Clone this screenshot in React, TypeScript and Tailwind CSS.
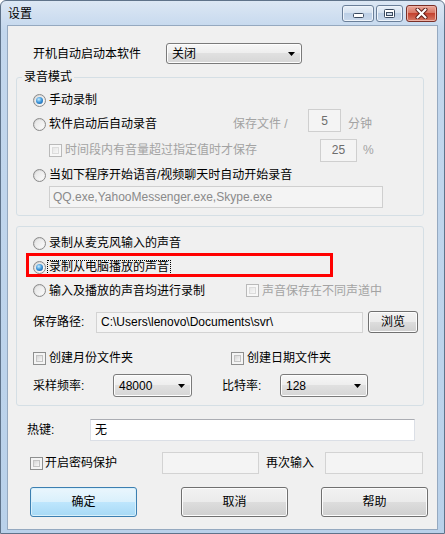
import React from "react";

function Radio({ checked }: { checked?: boolean }) {
  return (
    <span className="w-[13px] h-[13px] shrink-0 rounded-full border border-[#8a8a8a] bg-[linear-gradient(135deg,#cfcfcf,#f9f9f9)] flex items-center justify-center">
      <span className="w-[9px] h-[9px] rounded-full bg-[linear-gradient(135deg,#e4e4e4,#fbfbfb)] flex items-center justify-center">
        {checked && (
          <span className="w-[7px] h-[7px] rounded-full bg-[radial-gradient(circle_at_40%_35%,#c4ecff,#3a93d8_50%,#0f4f8f)]" />
        )}
      </span>
    </span>
  );
}

function Check({ disabled }: { disabled?: boolean }) {
  return (
    <span
      className={
        disabled
          ? "w-[13px] h-[13px] shrink-0 border border-[#b9b9b9] bg-[#f7f7f7] p-[2px] flex"
          : "w-[13px] h-[13px] shrink-0 border border-[#8e8f8f] bg-[#f4f4f4] p-[2px] flex"
      }
    >
      <span
        className={
          disabled
            ? "flex-1 border border-[#dcdcdc] bg-[linear-gradient(135deg,#e6e6e6,#f7f7f7)]"
            : "flex-1 border border-[#c3c3c3] bg-[linear-gradient(135deg,#d6d6d6,#f8f8f8)]"
        }
      />
    </span>
  );
}

function Select({ value, className }: { value: string; className: string }) {
  return (
    <div
      className={
        className +
        " rounded-[3px] border border-[#7a7a7a] bg-[linear-gradient(#f7f7f7,#ededed_50%,#e0e0e0_50%,#d6d6d6)] shadow-[inset_0_0_0_1px_#fdfdfd] flex items-center justify-between pl-[5px] pr-[6px]"
      }
    >
      <span className="leading-[14px]">{value}</span>
      <svg width="7" height="4" viewBox="0 0 7 4">
        <path d="M0 0H7L3.5 4Z" fill="#000" />
      </svg>
    </div>
  );
}

function Button({ label, def, className }: { label: string; def?: boolean; className: string }) {
  return (
    <div
      className={
        className +
        (def
          ? " rounded-[3px] border border-[#3c7fb1] bg-[linear-gradient(#eaf6fd,#d9f0fc_50%,#bee6fd_50%,#a7d9f5)] shadow-[inset_0_0_0_1px_#d8f0fb] flex items-center justify-center"
          : " rounded-[3px] border border-[#707070] bg-[linear-gradient(#f2f2f2,#ebebeb_50%,#dddddd_50%,#cfcfcf)] shadow-[inset_0_0_0_1px_#fcfcfc] flex items-center justify-center")
      }
    >
      <span className="leading-[14px]">{label}</span>
    </div>
  );
}

export default function App() {
  return (
    <div className="relative w-[445px] h-[534px] flex flex-col border border-[#5f738a] rounded-t-[6px] bg-[linear-gradient(#dce7f4,#c3d7ed_30px,#b9d1ea)] text-[12px] text-black font-['Liberation_Sans','Noto_Sans_CJK_SC',sans-serif] overflow-hidden">
      {/* Title bar */}
      <div className="h-[24px] flex items-start shrink-0">
        <span className="pl-[7px] pt-[6px] leading-[14px] text-[12px]">设置</span>
        <div className="ml-auto mr-[7px] mt-[4px] flex">
          <div className="w-[32px] h-[17px] rounded-[3px] border border-[#6a7f99] bg-[linear-gradient(#e9f0f8,#d3e0ef_50%,#bccfe6_50%,#c9d9ec)] shadow-[inset_0_0_0_1px_#eef4fb] flex items-end justify-center pb-[3px]">
            <svg width="11" height="5" viewBox="0 0 11 5">
              <rect x="0.5" y="0.5" width="10" height="4" rx="1" fill="#fff" stroke="#3a4a60" />
            </svg>
          </div>
          <div className="ml-[2px] w-[27px] h-[17px] rounded-[3px] border border-[#6a7f99] bg-[linear-gradient(#e9f0f8,#d3e0ef_50%,#bccfe6_50%,#c9d9ec)] shadow-[inset_0_0_0_1px_#eef4fb] flex items-center justify-center">
            <svg width="11" height="9" viewBox="0 0 11 9">
              <rect x="0.5" y="0.5" width="10" height="8" rx="1" fill="#fff" stroke="#3a4a60" />
              <rect x="2.5" y="3.5" width="6" height="3" fill="#cddbeb" stroke="#3a4a60" />
            </svg>
          </div>
          <div className="ml-[3px] w-[31px] h-[17px] rounded-[3px] border border-[#7a2f27] bg-[linear-gradient(#eaa89b,#d6725f_50%,#c4422f_50%,#d67a66)] shadow-[inset_0_0_0_1px_#eeb2a6] flex items-center justify-center">
            <svg width="13" height="11" viewBox="0 0 13 11">
              <path d="M2.5 1.5L10.5 9.5M10.5 1.5L2.5 9.5" stroke="#5a1a14" strokeWidth="4" strokeLinecap="round" />
              <path d="M2.5 1.5L10.5 9.5M10.5 1.5L2.5 9.5" stroke="#fff" strokeWidth="2.2" strokeLinecap="round" />
            </svg>
          </div>
        </div>
      </div>

      {/* Client area */}
      <div className="mx-[6px] mb-[3px] flex-1 border border-[#95a9c0] bg-[#f0f0f0] flex flex-col">
        <div className="mt-[17px] h-[21px] flex items-center">
          <span className="w-[158px] pl-[25px] leading-[14px]">开机自动启动本软件</span>
          <Select value="关闭" className="w-[136px] h-[21px]" />
        </div>

        {/* Group 1 */}
        <fieldset className="mt-[7px] ml-[8px] w-[408px] border border-[#d5dfe5] rounded-[3px]">
          <legend className="ml-[5px] px-[2px] text-[12px] leading-[12px]">录音模式</legend>
          <div className="pl-[16px] pt-[5px] pb-[7px] flex flex-col">
            <div className="h-[24px] flex items-center">
              <Radio checked />
              <span className="ml-[3px] leading-[14px]">手动录制</span>
            </div>
            <div className="h-[24px] flex items-center">
              <div className="w-[200px] flex items-center">
                <Radio />
                <span className="ml-[3px] leading-[14px]">软件启动后自动录音</span>
              </div>
              <span className="w-[75px] leading-[14px] text-[#a3a3a3]">保存文件 /</span>
              <div className="w-[33px] h-[23px] mb-[7px] border border-[#cfcfcf] bg-[#f4f4f4] flex items-center justify-center text-[#6d6d6d]">5</div>
              <span className="ml-[7px] leading-[14px] text-[#a3a3a3]">分钟</span>
            </div>
            <div className="h-[28px] flex items-center">
              <div className="w-[287px] pl-[16px] flex items-center">
                <Check disabled />
                <span className="ml-[3px] leading-[14px] text-[#a3a3a3]">时间段内有音量超过指定值时才保存</span>
              </div>
              <div className="w-[37px] h-[23px] border border-[#cfcfcf] bg-[#f4f4f4] flex items-center justify-center text-[#6d6d6d]">25</div>
              <span className="ml-[6px] leading-[14px] text-[#a3a3a3]">%</span>
            </div>
            <div className="h-[22px] flex items-center">
              <Radio />
              <span className="ml-[3px] leading-[14px]">当如下程序开始语音/视频聊天时自动开始录音</span>
            </div>
            <div className="ml-[16px] w-[334px] h-[22px] border border-[#cfcfcf] bg-[#f4f4f4] flex items-center pl-[3px] text-[#8a8a8a]">
              QQ.exe,YahooMessenger.exe,Skype.exe
            </div>
          </div>
        </fieldset>

        {/* Group 2 */}
        <div className="mt-[10px] ml-[8px] w-[408px] border border-[#d5dfe5] rounded-[3px] pl-[16px] pt-[4px] pb-[8px] flex flex-col">
          <div className="h-[24px] flex items-center">
            <Radio />
            <span className="ml-[3px] leading-[14px]">录制从麦克风输入的声音</span>
          </div>
          <div className="h-[24px] flex items-center">
            <Radio checked />
            <span className="ml-[2px] px-[1px] leading-[13px] outline-1 outline-dotted outline-black">录制从电脑播放的声音</span>
          </div>
          <div className="h-[23px] flex items-center">
            <div className="w-[213px] flex items-center">
              <Radio />
              <span className="ml-[3px] leading-[14px]">输入及播放的声音均进行录制</span>
            </div>
            <Check disabled />
            <span className="ml-[3px] leading-[14px] text-[#a3a3a3]">声音保存在不同声道中</span>
          </div>
          <div className="mt-[8px] h-[24px] flex items-center">
            <span className="w-[63px] leading-[14px]">保存路径:</span>
            <div className="w-[267px] h-[21px] border border-[#d3d3d3] bg-[#f4f4f4] flex items-center pl-[4px]">
              C:\Users\lenovo\Documents\svr\
            </div>
            <Button label="浏览" className="ml-[5px] w-[50px] h-[22px]" />
          </div>
          <div className="mt-[13px] h-[22px] flex items-center">
            <div className="w-[198px] flex items-center">
              <Check />
              <span className="ml-[3px] leading-[14px]">创建月份文件夹</span>
            </div>
            <Check />
            <span className="ml-[3px] leading-[14px]">创建日期文件夹</span>
          </div>
          <div className="mt-[5px] h-[23px] flex items-center">
            <span className="w-[80px] leading-[14px]">采样频率:</span>
            <Select value="48000" className="w-[79px] h-[23px]" />
            <span className="ml-[30px] w-[58px] leading-[14px]">比特率:</span>
            <Select value="128" className="w-[88px] h-[23px]" />
          </div>
        </div>

        <div className="mt-[13px] h-[22px] pl-[19px] flex items-center">
          <span className="w-[63px] leading-[14px]">热键:</span>
          <div className="w-[325px] h-[22px] border border-[#dbdfe6] border-t-[#abadb3] bg-white flex items-center pl-[4px]">无</div>
        </div>

        <div className="mt-[11px] h-[22px] pl-[22px] flex items-center">
          <div className="w-[132px] flex items-center">
            <Check />
            <span className="ml-[2px] leading-[14px]">开启密码保护</span>
          </div>
          <div className="w-[97px] h-[22px] border border-[#d3d3d3] bg-[#f4f4f4]" />
          <span className="w-[66px] pl-[7px] leading-[14px]">再次输入</span>
          <div className="w-[98px] h-[22px] border border-[#d3d3d3] bg-[#f4f4f4]" />
        </div>

        <div className="mt-[13px] h-[30px] pl-[22px] flex items-center">
          <Button label="确定" def className="w-[107px] h-[30px]" />
          <Button label="取消" className="ml-[44px] w-[107px] h-[30px]" />
          <Button label="帮助" className="ml-[33px] w-[107px] h-[30px]" />
        </div>
      </div>

      {/* Red annotation rectangle */}
      <div className="absolute left-[25px] top-[252px] w-[307px] h-[24px] border-[3px] border-[#ff0000]" />
    </div>
  );
}
